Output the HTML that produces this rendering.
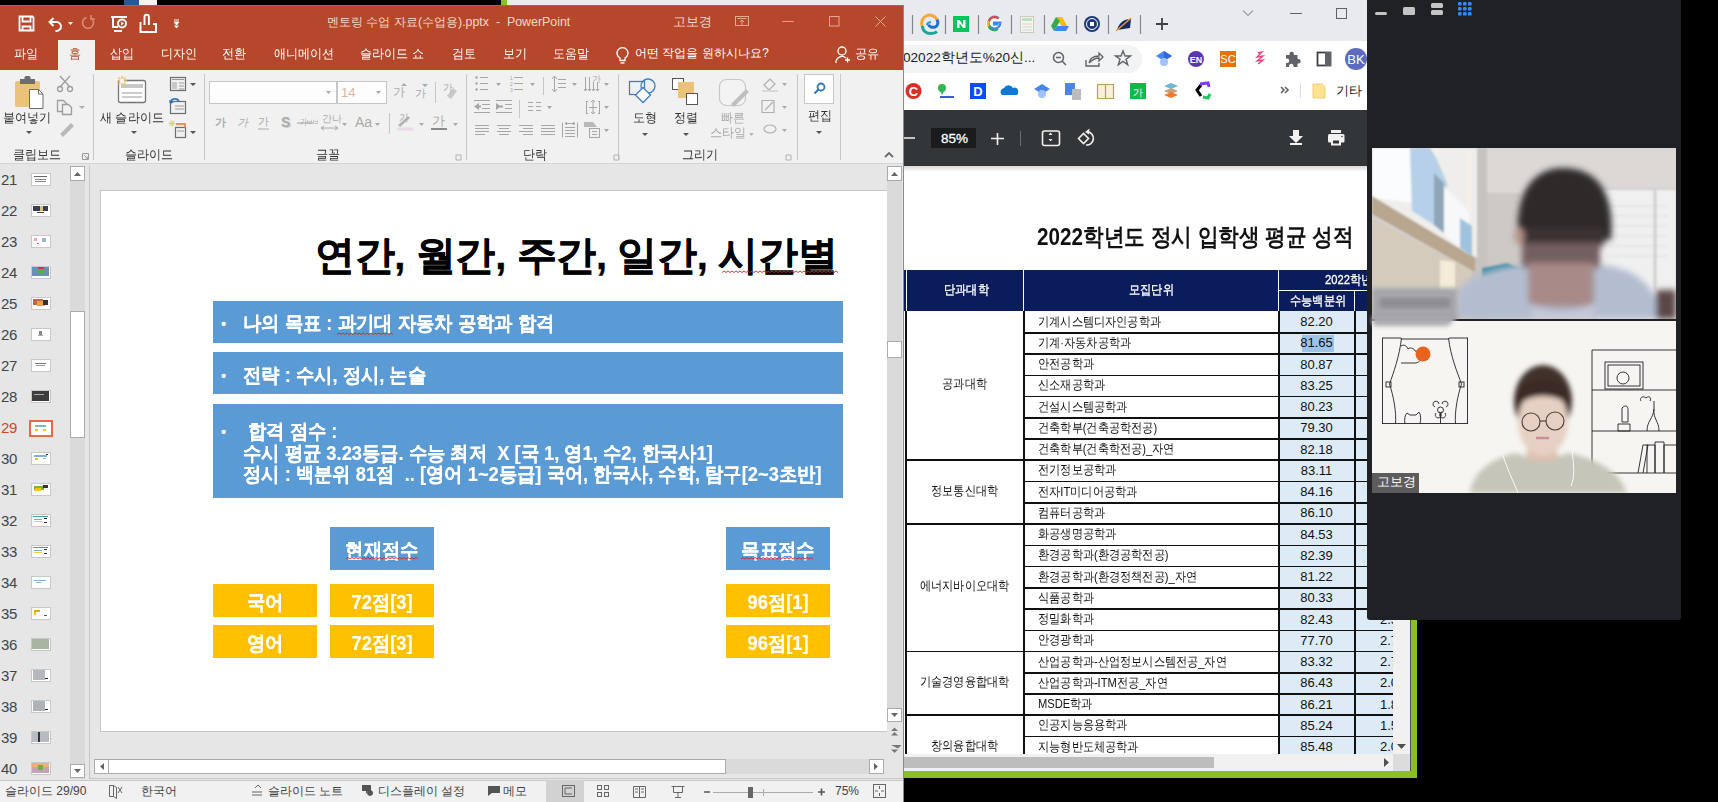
<!DOCTYPE html>
<html><head><meta charset="utf-8">
<style>
*{margin:0;padding:0;box-sizing:border-box}
html,body{width:1718px;height:802px;overflow:hidden;background:#000;font-family:"Liberation Sans",sans-serif;position:relative}
.a{position:absolute}
.t{position:absolute;white-space:nowrap;line-height:1}
.sl{transform:scaleX(0.915);transform-origin:0 0;-webkit-text-stroke:0.15px #fff}
.sc{transform:scaleX(0.915);transform-origin:50% 0;-webkit-text-stroke:0.15px #fff}
.rl{transform:scaleX(0.93);transform-origin:0 0}
.tb{transform:scaleX(0.93);transform-origin:0 0}
.k86{transform:scaleX(0.86);transform-origin:0 0}
.k86c{transform:scaleX(0.86);transform-origin:50% 0}
.th{-webkit-text-stroke:0.35px #fff}
</style></head><body>

<!-- top black strip & chrome frame behind -->
<div class="a" style="left:0;top:0;width:501px;height:5px;background:#000"></div>
<div class="a" style="left:124px;top:0;width:15px;height:5px;background:#2b579a"></div>
<div class="a" style="left:139px;top:0;width:18px;height:5px;background:#f3f3f3"></div>
<div class="a" style="left:501px;top:0;width:6px;height:5px;background:#8bbd27"></div>

<!-- CHROME WINDOW -->
<div class="a" style="left:507px;top:0;width:904px;height:771px;background:#e8eaed"></div>
<div class="a" style="left:903px;top:41px;width:508px;height:69px;background:#fff"></div>
<div class="a" style="left:903px;top:45px;width:239px;height:28px;border-radius:0 14px 14px 0;background:#f1f3f4"></div>
<div class="t" style="left:903px;top:51px;font-size:13.6px;color:#202124">02022학년도%20신...</div>
<svg class="a" style="left:903px;top:0" width="508" height="166">
  <g stroke="#80868b" stroke-width="1.2"><path d="M9.5 15v19M42.5 15v19M75.5 15v19M108.5 15v19M141.5 15v19M173.5 15v19M205.5 15v19M237.5 15v19"/></g>
  <!-- edge -->
  <path d="M19.5 27a8 8 0 0 1 14.5 -7.5" fill="none" stroke="#f6a93b" stroke-width="3"/>
  <path d="M34 19.5c1.5 3 1 6.5 -2 7.5c-3 1 -6 -0.5 -6.5 -2.5" fill="none" stroke="#1e6fd0" stroke-width="3"/>
  <path d="M19.5 26c0 5 4 7.5 8 7.5c3 0 5.5 -1 6.5 -2" fill="none" stroke="#18a89a" stroke-width="3"/>
  <path d="M24 25c0 -2 2 -3 4 -2.5" fill="none" stroke="#2b9bd0" stroke-width="2"/>
  <!-- naver -->
  <rect x="50" y="16" width="16" height="16" fill="#03c75a"/><path d="M54 28v-8h2.5l3.5 5v-5h2.5v8h-2.5l-3.5 -5v5z" fill="#fff"/>
  <!-- google -->
  <circle cx="91" cy="24" r="8" fill="#fff"/>
  <path d="M95.5 24.5h-4.5v-2h6.5a6 6 0 1 1 -1.8 -4.2" fill="none" stroke="#4285f4" stroke-width="2.2"/>
  <path d="M86 21a6 6 0 0 1 9.5 -2.5" fill="none" stroke="#ea4335" stroke-width="2.2"/>
  <path d="M85.5 26a6 6 0 0 0 9.5 3" fill="none" stroke="#34a853" stroke-width="2.2"/><path d="M85.7 21a6 6 0 0 0 0 5.5" fill="none" stroke="#fbbc05" stroke-width="2.2"/>
  <!-- calc -->
  <rect x="117.5" y="16.5" width="13" height="16" fill="#f5f5f0" stroke="#c9c9c0"/><rect x="119" y="18" width="10" height="3" fill="#bfe0bf"/>
  <path d="M119 24h10M119 27h10M119 30h10" stroke="#d5d5d0"/>
  <!-- drive -->
  <path d="M153 17h6l6 10h-6z" fill="#fbbc04"/><path d="M153 17l-5 9 3 5 6 -10z" fill="#34a853"/><path d="M151 31h12l3 -5h-12z" fill="#4285f4"/>
  <!-- univ seal -->
  <circle cx="189" cy="24" r="8" fill="#1f3a7a"/><circle cx="189" cy="24" r="5.5" fill="none" stroke="#fff" stroke-width="1"/><path d="M187 22h4v4h-4z" fill="#fff"/>
  <!-- pen -->
  <path d="M214 30c2 -8 8 -11 14 -11l-1 9z" fill="#1a2a5e"/><path d="M213 31l15 -13" stroke="#f0a040" stroke-width="1.3"/>
  <path d="M253 24h12M259 18v12" stroke="#3c4043" stroke-width="1.8"/>
  <path d="M340 10.5l5 5 5 -5" fill="none" stroke="#5f6368" stroke-width="1"/>
  <path d="M387 13.5h12" stroke="#5f6368" stroke-width="1"/>
  <rect x="433.5" y="8.5" width="10" height="10" fill="none" stroke="#5f6368" stroke-width="1"/>
  <!-- omnibox icons -->
  <circle cx="155.5" cy="57.5" r="5" fill="none" stroke="#5f6368" stroke-width="1.5"/><path d="M159 61l4 4M153 57.5h5" stroke="#5f6368" stroke-width="1.5"/>
  <path d="M183 60v6h13v-3" fill="none" stroke="#5f6368" stroke-width="1.4"/><path d="M186 63c1 -5 5 -7 10 -7v-3l4 4 -4 4v-3c-4 0 -7 2 -10 5" fill="none" stroke="#5f6368" stroke-width="1.3"/>
  <path d="M220 51l2 5h5.5l-4.5 3.3 1.7 5.4 -4.7 -3.3 -4.7 3.3 1.7 -5.4 -4.5 -3.3h5.5z" fill="none" stroke="#5f6368" stroke-width="1.4"/>
  <!-- extensions -->
  <path d="M253 56l8 -5 8 5 -8 5z" fill="#4285f4"/><path d="M261 51l8 5 -8 5z" fill="#3367d6"/><circle cx="261" cy="62" r="4" fill="#a0c3ff"/>
  <circle cx="293" cy="59" r="8" fill="#5e35b1"/><text x="293" y="62.5" font-size="9" font-weight="bold" fill="#fff" text-anchor="middle" font-family="Liberation Sans">EN</text>
  <rect x="317" y="51" width="16" height="16" fill="#e8710a"/><text x="325" y="63" font-size="11" fill="#fff" text-anchor="middle" font-family="Liberation Sans">SC</text>
  <path d="M355 53l4 -1 -5 5 6 -1 -6 5 6 -1 -5 4" fill="none" stroke="#f0407a" stroke-width="1.3"/>
  <path d="M383 55h3.5v-1a2.2 2.2 0 0 1 4.4 0v1h3.6v4h1a2.2 2.2 0 0 1 0 4.4h-1v3.6h-4v-1a2.2 2.2 0 0 0 -4.4 0v1h-3.1v-4h1a2.2 2.2 0 0 0 0 -4.4h-1z" fill="#5f6368"/>
  <rect x="414.5" y="52.5" width="13" height="13" fill="none" stroke="#3c4043" stroke-width="1.8"/><rect x="422" y="52" width="6" height="14" fill="#5f6368"/>
  <circle cx="453" cy="59" r="11" fill="#5c6bc0"/><text x="453" y="64" font-size="13" fill="#fff" text-anchor="middle" font-family="Liberation Sans">BK</text>
  <!-- bookmarks -->
  <circle cx="10.5" cy="91" r="8" fill="#d93025"/><text x="10.5" y="96" font-size="13" font-weight="bold" fill="#fff" text-anchor="middle" font-family="Liberation Sans">C</text>
  <path d="M37 97h14" stroke="#3b5bdb" stroke-width="2"/><circle cx="39" cy="88" r="4" fill="#2fb84f"/><path d="M37 91l2 4 2 -4z" fill="#2fb84f"/>
  <rect x="67" y="83" width="16" height="16" fill="#0a4cff"/><text x="75" y="96" font-size="13" font-weight="bold" fill="#fff" text-anchor="middle" font-family="Liberation Sans">D</text>
  <path d="M99 95a4 4 0 0 1 2 -7a5 5 0 0 1 9 0a3.5 3.5 0 0 1 5 4a3 3 0 0 1 -1 3z" fill="#0f78d4"/>
  <path d="M131 89l8 -5 8 5 -8 5z" fill="#4a86e8"/><circle cx="139" cy="94" r="4" fill="#a0c3ff"/>
  <rect x="162" y="83" width="10" height="12" fill="#4a86e8"/><rect x="169" y="89" width="9" height="11" fill="#bbb"/>
  <path d="M194.5 84.5h16v14h-16zM202.5 85v13" fill="#f7f0dd" stroke="#b8a060" stroke-width="1.2"/>
  <rect x="227" y="83" width="16" height="16" fill="#13b84a"/><text x="235" y="95.5" font-size="10" fill="#fff" text-anchor="middle">가</text>
  <path d="M261 86l7 -3 7 3 -7 3z" fill="#6bb8d8"/><path d="M261 91l7 -3 7 3 -7 3z" fill="#c9a080"/><path d="M261 95l7 -3 7 3 -7 3z" fill="#f07a30"/>
  <path d="M298 85l-4 5 4 6" fill="none" stroke="#000" stroke-width="3"/><path d="M297 84l8 -1 1 4" fill="none" stroke="#7c3aed" stroke-width="3"/><path d="M300 97l5 1 2 -4" fill="none" stroke="#22c55e" stroke-width="3"/>
  <path d="M378 87l3 3 -3 3M382 87l3 3 -3 3" fill="none" stroke="#5f6368" stroke-width="1.6"/>
  <path d="M397.5 83v15" stroke="#dadce0"/>
  <path d="M410 84h9l3 3v11h-12z" fill="#fde293" stroke="#e8c860" stroke-width="0.8"/>
  <!-- pdf toolbar -->
  <rect x="1" y="110" width="507" height="56" fill="#323639"/>
  <path d="M1 138h11M88 138.5h13M94.5 133v12" stroke="#f1f1f1" stroke-width="1.6"/>
  <rect x="28" y="128" width="45" height="20" fill="#191b1c"/>
  <path d="M117.5 131v15" stroke="#6b6e70"/>
  <rect x="139.5" y="131" width="17" height="14.5" rx="2" fill="none" stroke="#f1f1f1" stroke-width="1.6"/>
  <path d="M145.5 135l2 -2.5 2 2.5zM145.5 139l2 2.5 2 -2.5z" fill="#f1f1f1"/>
  <path d="M184.5 131.8A6.6 6.6 0 1 1 183 145" fill="none" stroke="#f1f1f1" stroke-width="1.6"/><path d="M186.5 128.5l-4.5 3.5 4 2.5z" fill="#f1f1f1"/>
  <path d="M175.5 138.5l5 -5 5 5 -5 5z" fill="none" stroke="#f1f1f1" stroke-width="1.6"/>
  <path d="M390 130h6v6h4l-7 7 -7 -7h4z" fill="#f1f1f1"/><rect x="387" y="143" width="12" height="2" fill="#f1f1f1"/>
  <rect x="428" y="130" width="10" height="3" fill="#f1f1f1"/><rect x="425" y="134" width="16.5" height="8.5" rx="1.5" fill="#f1f1f1"/><rect x="428" y="139" width="10" height="6.5" fill="#f1f1f1"/><rect x="430" y="140.5" width="6" height="3" fill="#323639"/><circle cx="439" cy="136.5" r="0.8" fill="#323639"/>
</svg>
<div class="t" style="left:941px;top:132px;font-size:13.5px;color:#fff;-webkit-text-stroke:0.3px #fff">85%</div>
<div class="t" style="left:1336px;top:84px;font-size:13px;color:#202124">기타 북</div>
<!-- pdf page area -->
<div class="a" style="left:903px;top:166px;width:490px;height:588px;background:#fff" id="pdf"></div>
<div class="a" style="left:903px;top:166px;width:490px;height:6px;background:linear-gradient(#d8d8d8,#fff)"></div>
<div class="a" style="left:903px;top:165px;width:490px;height:589px;overflow:hidden">
<div class="a" style="left:-903px;top:-165px;width:1718px;height:802px">
<div class="t k86" id="pdft" style="left:1037px;top:225px;font-size:24px;font-weight:bold;color:#111">2022학년도 정시 입학생 평균 성적</div>
<div class="a" style="left:904px;top:270px;width:489px;height:41px;background:#0b1c5d"></div>
<div class="a" style="left:906px;top:270px;width:1px;height:41px;background:#fff"></div>
<div class="a" style="left:1023px;top:270px;width:1px;height:41px;background:#fff"></div>
<div class="a" style="left:1278px;top:270px;width:1px;height:41px;background:#fff"></div>
<div class="a" style="left:1279px;top:290px;width:114px;height:1px;background:#fff"></div>
<div class="a" style="left:1354px;top:291px;width:1px;height:20px;background:#fff"></div>
<div class="t th k86" style="left:944px;top:283px;font-size:13px;color:#fff">단과대학</div>
<div class="t th k86" style="left:1129px;top:283px;font-size:13px;color:#fff">모집단위</div>
<div class="t th k86" style="left:1290px;top:294px;font-size:13px;color:#fff">수능백분위</div>
<div class="t th k86" style="left:1325px;top:273px;font-size:13px;color:#fff">2022학년도</div>
<div class="a" style="left:1279px;top:311px;width:114px;height:443px;background:#ddebf7"></div>
<div class="a" style="left:1302px;top:335px;width:32px;height:17px;background:#9dc3e6"></div>
<div class="t tr k86" style="left:1038px;top:314.5px;font-size:13px;color:#111">기계시스템디자인공학과</div>
<div class="t tr" style="left:1279px;top:315.0px;width:75px;text-align:center;font-size:13px;color:#111">82.20</div>
<div class="a" style="left:1023px;top:332.0px;width:370px;height:1.6px;background:#111"></div>
<div class="t tr k86" style="left:1038px;top:335.8px;font-size:13px;color:#111">기계·자동차공학과</div>
<div class="t tr" style="left:1279px;top:336.3px;width:75px;text-align:center;font-size:13px;color:#111">81.65</div>
<div class="a" style="left:1023px;top:353.2px;width:370px;height:1.6px;background:#111"></div>
<div class="t tr k86" style="left:1038px;top:357.0px;font-size:13px;color:#111">안전공학과</div>
<div class="t tr" style="left:1279px;top:357.5px;width:75px;text-align:center;font-size:13px;color:#111">80.87</div>
<div class="a" style="left:1023px;top:374.5px;width:370px;height:1.6px;background:#111"></div>
<div class="t tr k86" style="left:1038px;top:378.2px;font-size:13px;color:#111">신소재공학과</div>
<div class="t tr" style="left:1279px;top:378.7px;width:75px;text-align:center;font-size:13px;color:#111">83.25</div>
<div class="a" style="left:1023px;top:395.8px;width:370px;height:1.6px;background:#111"></div>
<div class="t tr k86" style="left:1038px;top:399.5px;font-size:13px;color:#111">건설시스템공학과</div>
<div class="t tr" style="left:1279px;top:400.0px;width:75px;text-align:center;font-size:13px;color:#111">80.23</div>
<div class="a" style="left:1023px;top:417.0px;width:370px;height:1.6px;background:#111"></div>
<div class="t tr k86" style="left:1038px;top:420.8px;font-size:13px;color:#111">건축학부(건축공학전공)</div>
<div class="t tr" style="left:1279px;top:421.3px;width:75px;text-align:center;font-size:13px;color:#111">79.30</div>
<div class="a" style="left:1023px;top:438.2px;width:370px;height:1.6px;background:#111"></div>
<div class="t tr k86" style="left:1038px;top:442.0px;font-size:13px;color:#111">건축학부(건축학전공)_자연</div>
<div class="t tr" style="left:1279px;top:442.5px;width:75px;text-align:center;font-size:13px;color:#111">82.18</div>
<div class="a" style="left:1023px;top:459.5px;width:370px;height:1.6px;background:#111"></div>
<div class="t tr k86" style="left:1038px;top:463.2px;font-size:13px;color:#111">전기정보공학과</div>
<div class="t tr" style="left:1279px;top:463.7px;width:75px;text-align:center;font-size:13px;color:#111">83.11</div>
<div class="a" style="left:1023px;top:480.8px;width:370px;height:1.6px;background:#111"></div>
<div class="t tr k86" style="left:1038px;top:484.5px;font-size:13px;color:#111">전자IT미디어공학과</div>
<div class="t tr" style="left:1279px;top:485.0px;width:75px;text-align:center;font-size:13px;color:#111">84.16</div>
<div class="a" style="left:1023px;top:502.0px;width:370px;height:1.6px;background:#111"></div>
<div class="t tr k86" style="left:1038px;top:505.8px;font-size:13px;color:#111">컴퓨터공학과</div>
<div class="t tr" style="left:1279px;top:506.3px;width:75px;text-align:center;font-size:13px;color:#111">86.10</div>
<div class="a" style="left:1023px;top:523.2px;width:370px;height:1.6px;background:#111"></div>
<div class="t tr k86" style="left:1038px;top:527.0px;font-size:13px;color:#111">화공생명공학과</div>
<div class="t tr" style="left:1279px;top:527.5px;width:75px;text-align:center;font-size:13px;color:#111">84.53</div>
<div class="a" style="left:1023px;top:544.5px;width:370px;height:1.6px;background:#111"></div>
<div class="t tr k86" style="left:1038px;top:548.2px;font-size:13px;color:#111">환경공학과(환경공학전공)</div>
<div class="t tr" style="left:1279px;top:548.7px;width:75px;text-align:center;font-size:13px;color:#111">82.39</div>
<div class="a" style="left:1023px;top:565.8px;width:370px;height:1.6px;background:#111"></div>
<div class="t tr k86" style="left:1038px;top:569.5px;font-size:13px;color:#111">환경공학과(환경정책전공)_자연</div>
<div class="t tr" style="left:1279px;top:570.0px;width:75px;text-align:center;font-size:13px;color:#111">81.22</div>
<div class="a" style="left:1023px;top:587.0px;width:370px;height:1.6px;background:#111"></div>
<div class="t tr k86" style="left:1038px;top:590.8px;font-size:13px;color:#111">식품공학과</div>
<div class="t tr" style="left:1279px;top:591.3px;width:75px;text-align:center;font-size:13px;color:#111">80.33</div>
<div class="a" style="left:1023px;top:608.2px;width:370px;height:1.6px;background:#111"></div>
<div class="t tr k86" style="left:1038px;top:612.0px;font-size:13px;color:#111">정밀화학과</div>
<div class="t tr" style="left:1279px;top:612.5px;width:75px;text-align:center;font-size:13px;color:#111">82.43</div>
<div class="t tr" style="left:1380px;top:612.5px;font-size:13px;color:#111">2.5</div>
<div class="a" style="left:1023px;top:629.5px;width:370px;height:1.6px;background:#111"></div>
<div class="t tr k86" style="left:1038px;top:633.2px;font-size:13px;color:#111">안경광학과</div>
<div class="t tr" style="left:1279px;top:633.7px;width:75px;text-align:center;font-size:13px;color:#111">77.70</div>
<div class="t tr" style="left:1380px;top:633.7px;font-size:13px;color:#111">2.7</div>
<div class="a" style="left:1023px;top:650.8px;width:370px;height:1.6px;background:#111"></div>
<div class="t tr k86" style="left:1038px;top:654.5px;font-size:13px;color:#111">산업공학과-산업정보시스템전공_자연</div>
<div class="t tr" style="left:1279px;top:655.0px;width:75px;text-align:center;font-size:13px;color:#111">83.32</div>
<div class="t tr" style="left:1380px;top:655.0px;font-size:13px;color:#111">2.7</div>
<div class="a" style="left:1023px;top:672.0px;width:370px;height:1.6px;background:#111"></div>
<div class="t tr k86" style="left:1038px;top:675.8px;font-size:13px;color:#111">산업공학과-ITM전공_자연</div>
<div class="t tr" style="left:1279px;top:676.3px;width:75px;text-align:center;font-size:13px;color:#111">86.43</div>
<div class="t tr" style="left:1380px;top:676.3px;font-size:13px;color:#111">2.0</div>
<div class="a" style="left:1023px;top:693.2px;width:370px;height:1.6px;background:#111"></div>
<div class="t tr k86" style="left:1038px;top:697.0px;font-size:13px;color:#111">MSDE학과</div>
<div class="t tr" style="left:1279px;top:697.5px;width:75px;text-align:center;font-size:13px;color:#111">86.21</div>
<div class="t tr" style="left:1380px;top:697.5px;font-size:13px;color:#111">1.8</div>
<div class="a" style="left:1023px;top:714.5px;width:370px;height:1.6px;background:#111"></div>
<div class="t tr k86" style="left:1038px;top:718.2px;font-size:13px;color:#111">인공지능응용학과</div>
<div class="t tr" style="left:1279px;top:718.7px;width:75px;text-align:center;font-size:13px;color:#111">85.24</div>
<div class="t tr" style="left:1380px;top:718.7px;font-size:13px;color:#111">1.5</div>
<div class="a" style="left:1023px;top:735.8px;width:370px;height:1.6px;background:#111"></div>
<div class="t tr k86" style="left:1038px;top:739.5px;font-size:13px;color:#111">지능형반도체공학과</div>
<div class="t tr" style="left:1279px;top:740.0px;width:75px;text-align:center;font-size:13px;color:#111">85.48</div>
<div class="t tr" style="left:1380px;top:740.0px;font-size:13px;color:#111">2.0</div>
<div class="a" style="left:1023px;top:757.0px;width:370px;height:1.6px;background:#111"></div>
<div class="a" style="left:905px;top:459.2px;width:488px;height:1.6px;background:#111"></div>
<div class="t tr k86c" style="left:906px;top:377.4px;width:117px;text-align:center;font-size:13px;color:#111">공과대학</div>
<div class="a" style="left:905px;top:523.0px;width:488px;height:1.6px;background:#111"></div>
<div class="t tr k86c" style="left:906px;top:483.6px;width:117px;text-align:center;font-size:13px;color:#111">정보통신대학</div>
<div class="a" style="left:905px;top:650.5px;width:488px;height:1.6px;background:#111"></div>
<div class="t tr k86c" style="left:906px;top:579.3px;width:117px;text-align:center;font-size:13px;color:#111">에너지바이오대학</div>
<div class="a" style="left:905px;top:714.2px;width:488px;height:1.6px;background:#111"></div>
<div class="t tr k86c" style="left:906px;top:674.9px;width:117px;text-align:center;font-size:13px;color:#111">기술경영융합대학</div>
<div class="a" style="left:905px;top:778.0px;width:488px;height:1.6px;background:#111"></div>
<div class="t tr k86c" style="left:906px;top:738.6px;width:117px;text-align:center;font-size:13px;color:#111">창의융합대학</div>
<div class="a" style="left:905px;top:311px;width:1.8px;height:443px;background:#111"></div>
<div class="a" style="left:1023px;top:311px;width:1.8px;height:443px;background:#111"></div>
<div class="a" style="left:1278px;top:311px;width:1.8px;height:443px;background:#111"></div>
<div class="a" style="left:1354px;top:311px;width:1.8px;height:443px;background:#111"></div>
</div></div>
<!-- v scrollbar -->
<div class="a" style="left:1393px;top:165px;width:17px;height:606px;background:#f1f1f1"></div>
<div class="a" style="left:1393px;top:754px;width:17px;height:17px;background:#dcdcdc"></div>
<div class="a" style="left:1410px;top:0;width:1px;height:771px;background:#555"></div>
<svg class="a" style="left:1393px;top:740px" width="17" height="12"><path d="M4 4h9l-4.5 5z" fill="#505050"/></svg>
<!-- h scrollbar -->
<div class="a" style="left:903px;top:754px;width:490px;height:17px;background:#f1f1f1"></div>
<div class="a" style="left:903px;top:757px;width:311px;height:11px;background:#bdbdbd"></div>
<svg class="a" style="left:1380px;top:754px" width="13" height="17"><path d="M4 4v9l5 -4.5z" fill="#505050"/></svg>
<div class="a" style="left:1411px;top:0;width:6px;height:778px;background:#8bbd27"></div>
<div class="a" style="left:501px;top:771px;width:916px;height:7px;background:#8bbd27"></div>

<!-- POWERPOINT WINDOW -->
<div id="ppt" class="a" style="left:0;top:5px;width:904px;height:797px;background:#b7472a;border-top:1px solid #777;border-right:1px solid #8a8a8a">
  <!-- ribbon -->
  <div class="a" style="left:0;top:64px;width:903px;height:94px;background:#f1f1f1;border-bottom:1px solid #d5d5d5"></div>
  <div class="a" style="left:58px;top:34px;width:37px;height:31px;background:#f1f1f1"></div>
  <!-- title bar -->
  <div class="t" id="ttl" style="left:327px;top:10px;font-size:12.4px;color:#f4d6cb">멘토링 수업 자료(수업용).pptx&nbsp;&nbsp;-&nbsp;&nbsp;PowerPoint</div>
  <div class="t" style="left:673px;top:9px;font-size:13px;color:#f4d6cb">고보경</div>
  <svg class="a" style="left:0;top:0" width="903" height="34">
    <path d="M19.5 10.5h13l1 1v13h-14zM22.5 11v4.5h8v-4.5M22.5 24v-3.5h8v3.5" fill="none" stroke="#fff" stroke-width="1.8"/>
    <g fill="none" stroke="#fff" stroke-width="1.9">
      <path d="M50 16h6.5a4.5 4.5 0 0 1 0 9h-1"/><path d="M53.5 12l-4 4 4 4"/>
      <path d="M111 11h16M113 11v10h5"/><circle cx="122" cy="17.5" r="4"/><path d="M114 25h8"/>
      <path d="M140.5 16v10h15.5v-8h-3"/><path d="M144.5 19v-8a2.2 2.2 0 0 1 4.4 0v8"/>
    </g>
    <path d="M121 15.5v4l3 -2z" fill="#fff"/>
    <g fill="none" stroke="#d98b77" stroke-width="1.6"><path d="M91.5 12.5a5.5 5.5 0 1 1 -5 -1"/><path d="M91 9v4h4"/></g>
    <path d="M68 16h5l-2.5 3z" fill="#fff"/>
    <path d="M174 16h5l-2.5 3zM174 14h5" fill="#fff" stroke="#fff" stroke-width="1"/>
    <path d="M174 19.5h5l-2.5 3z" fill="#fff"/>
    <!-- window buttons -->
    <g fill="none" stroke="#e8a898" stroke-width="1">
      <rect x="735.5" y="10.5" width="13" height="9"/><path d="M737.5 12.5h9M742 19v-5M740 16l2 -2 2 2"/>
      <path d="M782.5 15.5h11"/>
      <rect x="829.5" y="10.5" width="9.5" height="9.5"/>
      <path d="M875.5 10.5l10 10M885.5 10.5l-10 10"/>
    </g>
  </svg>
  <!-- tabs -->
  <div class="t tb" style="left:14px;top:41px;font-size:13px;color:#fff">파일</div>
  <div class="t tb" style="left:69px;top:41px;font-size:13px;color:#b7472a">홈</div>
  <div class="t tb" style="left:110px;top:41px;font-size:13px;color:#fff">삽입</div>
  <div class="t tb" style="left:161px;top:41px;font-size:13px;color:#fff">디자인</div>
  <div class="t tb" style="left:222px;top:41px;font-size:13px;color:#fff">전환</div>
  <div class="t tb" style="left:274px;top:41px;font-size:13px;color:#fff">애니메이션</div>
  <div class="t tb" style="left:360px;top:41px;font-size:13px;color:#fff">슬라이드 쇼</div>
  <div class="t tb" style="left:452px;top:41px;font-size:13px;color:#fff">검토</div>
  <div class="t tb" style="left:503px;top:41px;font-size:13px;color:#fff">보기</div>
  <div class="t tb" style="left:553px;top:41px;font-size:13px;color:#fff">도움말</div>
  <div class="t" id="srch" style="left:635px;top:41px;font-size:12.4px;color:#fff">어떤 작업을 원하시나요?</div>
  <div class="t tb" style="left:855px;top:41px;font-size:13px;color:#fff">공유</div>
  <svg class="a" style="left:0;top:34px" width="903" height="30">
    <g fill="none" stroke="#fff" stroke-width="1.3">
      <path d="M620 20.5v-2.5a5.5 5.5 0 1 1 5 0v2.5z"/><path d="M620.5 23h4"/>
      <circle cx="842" cy="11" r="4"/><path d="M836 23a6 6 0 0 1 10 -5"/><path d="M845 20h5M847.5 17.5v5"/>
    </g>
  </svg>

  <!-- lower area -->
  <div class="a" style="left:0;top:158px;width:903px;height:617px;background:#e6e6e6"></div>
  <!-- status bar -->
  <div class="a" style="left:0;top:774px;width:903px;height:22px;background:#f1f1f1;border-top:1px solid #c8c8c8"></div>
</div>



<!-- LOWER PPT -->
<div class="a" style="left:70px;top:166px;width:15px;height:613px;background:#dadada"></div>
<div class="a" style="left:70px;top:166px;width:15px;height:15px;background:#fff;border:1px solid #ababab"></div>
<div class="a" style="left:70px;top:311px;width:15px;height:127px;background:#fff;border:1px solid #ababab"></div>
<div class="a" style="left:70px;top:764px;width:15px;height:14px;background:#fff;border:1px solid #ababab"></div>
<svg class="a" style="left:0;top:0" width="903" height="802">
  <path d="M74 176h7l-3.5-4z M74 769h7l-3.5 4z" fill="#666"/>
  <path d="M89.5 166v613" stroke="#c6c6c6"/>
</svg>
<div class="t" style="left:1px;top:172px;font-size:15px;color:#444;letter-spacing:-0.3px">21</div>
<svg class="a" style="left:31px;top:173px" width="20" height="13"><rect x="0.5" y="0.5" width="19" height="12" fill="#fff" stroke="#c8c8c8"/><rect x="3" y="3" width="13" height="1" fill="#666"/><rect x="4" y="6" width="11" height="1" fill="#888"/><rect x="4" y="8" width="11" height="1" fill="#888"/></svg>
<div class="t" style="left:1px;top:203px;font-size:15px;color:#444;letter-spacing:-0.3px">22</div>
<svg class="a" style="left:31px;top:204px" width="20" height="13"><rect x="0.5" y="0.5" width="19" height="12" fill="#fff" stroke="#c8c8c8"/><rect x="2" y="2" width="15" height="5" fill="#3a3d55"/><rect x="9" y="2" width="3" height="5" fill="#d9c27a"/><rect x="6" y="8" width="7" height="1" fill="#444"/></svg>
<div class="t" style="left:1px;top:234px;font-size:15px;color:#444;letter-spacing:-0.3px">23</div>
<svg class="a" style="left:31px;top:235px" width="20" height="13"><rect x="0.5" y="0.5" width="19" height="12" fill="#fff" stroke="#c8c8c8"/><rect x="3" y="3" width="3" height="3" fill="#e9a6c0"/><rect x="11" y="3" width="4" height="4" fill="#9fb3d8"/><rect x="6" y="8" width="2" height="1" fill="#e57"/></svg>
<div class="t" style="left:1px;top:265px;font-size:15px;color:#444;letter-spacing:-0.3px">24</div>
<svg class="a" style="left:31px;top:266px" width="20" height="13"><rect x="0.5" y="0.5" width="19" height="12" fill="#fff" stroke="#c8c8c8"/><rect x="1" y="1" width="17" height="9" fill="#6b8fb8"/><rect x="7" y="2" width="6" height="6" fill="#4caf50"/><rect x="7" y="1" width="6" height="2" fill="#e91e63"/></svg>
<div class="t" style="left:1px;top:296px;font-size:15px;color:#444;letter-spacing:-0.3px">25</div>
<svg class="a" style="left:31px;top:297px" width="20" height="13"><rect x="0.5" y="0.5" width="19" height="12" fill="#fff" stroke="#c8c8c8"/><rect x="2" y="2" width="10" height="6" fill="#c26a3a"/><rect x="6" y="4" width="8" height="5" fill="#e8a040"/><rect x="12" y="3" width="5" height="5" fill="#333"/></svg>
<div class="t" style="left:1px;top:327px;font-size:15px;color:#444;letter-spacing:-0.3px">26</div>
<svg class="a" style="left:31px;top:328px" width="20" height="13"><rect x="0.5" y="0.5" width="19" height="12" fill="#fff" stroke="#c8c8c8"/><rect x="8" y="3" width="3" height="4" fill="#888"/><rect x="7" y="7" width="5" height="1" fill="#aaa"/></svg>
<div class="t" style="left:1px;top:358px;font-size:15px;color:#444;letter-spacing:-0.3px">27</div>
<svg class="a" style="left:31px;top:359px" width="20" height="13"><rect x="0.5" y="0.5" width="19" height="12" fill="#fff" stroke="#c8c8c8"/><rect x="4" y="4" width="11" height="1" fill="#777"/><rect x="5" y="6" width="9" height="1" fill="#999"/></svg>
<div class="t" style="left:1px;top:389px;font-size:15px;color:#444;letter-spacing:-0.3px">28</div>
<svg class="a" style="left:31px;top:390px" width="20" height="13"><rect x="0.5" y="0.5" width="19" height="12" fill="#fff" stroke="#c8c8c8"/><rect x="1" y="1" width="17" height="10" fill="#3d3d3d"/><rect x="3" y="4" width="10" height="1" fill="#aaa"/></svg>
<div class="t" style="left:1px;top:420px;font-size:15px;color:#d24726;letter-spacing:-0.3px">29</div>
<div class="a" style="left:29px;top:420px;width:24px;height:17px;background:#ea6a48"></div>
<svg class="a" style="left:31px;top:422px" width="20" height="13"><rect width="20" height="13" fill="#fff"/><rect x="4" y="3" width="11" height="2" fill="#7fb0e0"/><rect x="4" y="7" width="3" height="2" fill="#ffc000"/><rect x="12" y="7" width="3" height="2" fill="#ffc000"/></svg>
<div class="t" style="left:1px;top:451px;font-size:15px;color:#444;letter-spacing:-0.3px">30</div>
<svg class="a" style="left:31px;top:452px" width="20" height="13"><rect x="0.5" y="0.5" width="19" height="12" fill="#fff" stroke="#c8c8c8"/><rect x="3" y="3" width="13" height="2" fill="#7fb0e0"/><rect x="4" y="6" width="3" height="2" fill="#ffc000"/><rect x="12" y="6" width="3" height="1" fill="#7fb0e0"/><rect x="15" y="2" width="2" height="1" fill="#333"/></svg>
<div class="t" style="left:1px;top:482px;font-size:15px;color:#444;letter-spacing:-0.3px">31</div>
<svg class="a" style="left:31px;top:483px" width="20" height="13"><rect x="0.5" y="0.5" width="19" height="12" fill="#fff" stroke="#c8c8c8"/><rect x="3" y="3" width="10" height="4" fill="#7bb33a"/><rect x="4" y="5" width="6" height="3" fill="#ffc000"/><rect x="12" y="2" width="5" height="3" fill="#333"/></svg>
<div class="t" style="left:1px;top:513px;font-size:15px;color:#444;letter-spacing:-0.3px">32</div>
<svg class="a" style="left:31px;top:514px" width="20" height="13"><rect x="0.5" y="0.5" width="19" height="12" fill="#fff" stroke="#c8c8c8"/><rect x="2" y="2" width="15" height="1" fill="#3a9"/><rect x="3" y="5" width="8" height="1" fill="#7ab"/><rect x="3" y="7" width="8" height="1" fill="#fc3"/><rect x="13" y="4" width="3" height="1" fill="#333"/><rect x="13" y="8" width="3" height="1" fill="#333"/></svg>
<div class="t" style="left:1px;top:544px;font-size:15px;color:#444;letter-spacing:-0.3px">33</div>
<svg class="a" style="left:31px;top:545px" width="20" height="13"><rect x="0.5" y="0.5" width="19" height="12" fill="#fff" stroke="#c8c8c8"/><rect x="2" y="2" width="15" height="1" fill="#3a9"/><rect x="3" y="5" width="8" height="1" fill="#7ab"/><rect x="3" y="7" width="8" height="1" fill="#fc3"/><rect x="13" y="4" width="3" height="1" fill="#333"/><rect x="13" y="8" width="3" height="1" fill="#333"/></svg>
<div class="t" style="left:1px;top:575px;font-size:15px;color:#444;letter-spacing:-0.3px">34</div>
<svg class="a" style="left:31px;top:576px" width="20" height="13"><rect x="0.5" y="0.5" width="19" height="12" fill="#fff" stroke="#c8c8c8"/><rect x="3" y="4" width="12" height="1" fill="#7fb0e0"/><rect x="5" y="6" width="5" height="1" fill="#aaa"/></svg>
<div class="t" style="left:1px;top:606px;font-size:15px;color:#444;letter-spacing:-0.3px">35</div>
<svg class="a" style="left:31px;top:607px" width="20" height="13"><rect x="0.5" y="0.5" width="19" height="12" fill="#fff" stroke="#c8c8c8"/><rect x="3" y="3" width="6" height="2" fill="#f5a000"/><rect x="3" y="5" width="2" height="3" fill="#ffc000"/><rect x="13" y="8" width="3" height="1" fill="#555"/></svg>
<div class="t" style="left:1px;top:637px;font-size:15px;color:#444;letter-spacing:-0.3px">36</div>
<svg class="a" style="left:31px;top:638px" width="20" height="13"><rect x="0.5" y="0.5" width="19" height="12" fill="#fff" stroke="#c8c8c8"/><rect x="1" y="1" width="17" height="10" fill="#a9b5a3"/></svg>
<div class="t" style="left:1px;top:668px;font-size:15px;color:#444;letter-spacing:-0.3px">37</div>
<svg class="a" style="left:31px;top:669px" width="20" height="13"><rect x="0.5" y="0.5" width="19" height="12" fill="#fff" stroke="#c8c8c8"/><rect x="2" y="1" width="12" height="10" fill="#b3b7be"/><rect x="14" y="9" width="3" height="1" fill="#222"/></svg>
<div class="t" style="left:1px;top:699px;font-size:15px;color:#444;letter-spacing:-0.3px">38</div>
<svg class="a" style="left:31px;top:700px" width="20" height="13"><rect x="0.5" y="0.5" width="19" height="12" fill="#fff" stroke="#c8c8c8"/><rect x="2" y="1" width="12" height="10" fill="#aeb2b9"/><rect x="14" y="9" width="3" height="1" fill="#222"/></svg>
<div class="t" style="left:1px;top:730px;font-size:15px;color:#444;letter-spacing:-0.3px">39</div>
<svg class="a" style="left:31px;top:731px" width="20" height="13"><rect x="0.5" y="0.5" width="19" height="12" fill="#fff" stroke="#c8c8c8"/><rect x="1" y="1" width="17" height="10" fill="#b8bcc1"/><rect x="7" y="1" width="2" height="10" fill="#333"/></svg>
<div class="t" style="left:1px;top:761px;font-size:15px;color:#444;letter-spacing:-0.3px">40</div>
<svg class="a" style="left:31px;top:762px" width="20" height="13"><rect x="0.5" y="0.5" width="19" height="12" fill="#fff" stroke="#c8c8c8"/><rect x="1" y="1" width="17" height="10" fill="#c8a0b8"/><rect x="1" y="1" width="17" height="4" fill="#e9b080"/><rect x="7" y="3" width="5" height="5" fill="#6ab04c"/></svg>
<div class="a" style="left:100px;top:190px;width:788px;height:542px;background:#fff;border:1px solid #c6c6c6"></div>
<!-- slide v scroll -->
<div class="a" style="left:887px;top:166px;width:15px;height:590px;background:#dadada"></div>
<div class="a" style="left:887px;top:166px;width:15px;height:15px;background:#fff;border:1px solid #ababab"></div>
<div class="a" style="left:887px;top:341px;width:15px;height:17px;background:#fff;border:1px solid #ababab"></div>
<div class="a" style="left:887px;top:708px;width:15px;height:14px;background:#fff;border:1px solid #ababab"></div>
<div class="a" style="left:887px;top:722px;width:15px;height:34px;background:#e6e6e6"></div>
<!-- slide h scroll -->
<div class="a" style="left:94px;top:759px;width:790px;height:15px;background:#dadada"></div>
<div class="a" style="left:94px;top:759px;width:15px;height:15px;background:#fff;border:1px solid #ababab"></div>
<div class="a" style="left:108px;top:759px;width:618px;height:15px;background:#fff;border:1px solid #ababab"></div>
<div class="a" style="left:869px;top:759px;width:15px;height:15px;background:#fff;border:1px solid #ababab"></div>
<svg class="a" style="left:0;top:0" width="903" height="802">
  <path d="M891 176h7l-3.5-4zM891 713h7l-3.5 4z" fill="#666"/>
  <path d="M891 731h7l-3.5-3.5zM891 735.5h7l-3.5-3.5zM891 745h7l3.5 0 -3.5 3.5zM891 749.5h7l-3.5 3.5z" fill="#777"/>
  <path d="M104 763v7l-4-3.5zM874 763v7l4-3.5z" fill="#666"/>
  <path d="M90 778.5h813" stroke="#c8c8c8"/>
</svg>
<!-- status bar -->
<div class="t" style="left:5px;top:785px;font-size:12px;color:#444">슬라이드 29/90</div>
<div class="t" style="left:141px;top:785px;font-size:12px;color:#444">한국어</div>
<div class="t" style="left:268px;top:785px;font-size:12px;color:#444">슬라이드 노트</div>
<div class="t" style="left:378px;top:785px;font-size:12px;color:#444">디스플레이 설정</div>
<div class="t" style="left:503px;top:785px;font-size:12px;color:#444">메모</div>
<div class="t" style="left:835px;top:785px;font-size:12px;color:#444">75%</div>
<div class="a" style="left:546px;top:780px;width:38px;height:22px;background:#d2d2d2"></div>
<svg class="a" style="left:0;top:780px" width="903" height="22">
  <g fill="none" stroke="#666" stroke-width="1">
    <path d="M109.5 5.5h4v11h-4zM113.5 5.5l3 2v11l-3 -2"/><path d="M118 7l4 6M122 7l-4 6"/>
    <path d="M255 8l3 -3 3 3M252 12h10M252 15h10"/>
    <rect x="562.5" y="5.5" width="12" height="11"/><path d="M565 8v6h7M565 8h7"/>
    <rect x="597.5" y="5.5" width="4" height="4"/><rect x="604.5" y="5.5" width="4" height="4"/><rect x="597.5" y="12.5" width="4" height="4"/><rect x="604.5" y="12.5" width="4" height="4"/>
    <path d="M633.5 6.5h6v11h-6zM639.5 6.5h6v11h-6zM635 9h3M635 12h3M641 9h3M641 12h3"/>
    <path d="M671.5 6.5h13M673.5 6.5v6h9v-6M678 12.5v5M675 17.5h6"/>
    <rect x="873.5" y="4.5" width="12" height="13"/><path d="M879.5 6v3M879.5 13v3M875 11h3M881 11h3"/>
  </g>
  <path d="M362 5h9v6h-3l-2 3v-3h-4z" fill="#555"/><path d="M370 10a3 3 0 1 0 0.1 0z" fill="#555"/>
  <path d="M488 6h12v7h-8l-4 3z" fill="#555"/>
  <path d="M704 12h6M818 12h7M821.5 8.5v7" stroke="#555" stroke-width="1.6"/>
  <path d="M713 12.5h100" stroke="#aaa"/><path d="M763.5 9v7" stroke="#aaa"/>
  <rect x="748" y="7" width="5" height="11" fill="#666"/>
</svg>


<!-- SLIDE CONTENT -->
<div id="stitle" class="t" style="-webkit-text-stroke:0.35px #000;left:315px;top:235px;font-size:40px;letter-spacing:-0.35px;font-weight:bold;color:#000">연간, 월간, 주간, 일간, 시간별</div>
<div class="a" style="left:213px;top:301px;width:630px;height:42px;background:#5b9bd5"></div>
<div class="a" style="left:213px;top:352px;width:630px;height:42px;background:#5b9bd5"></div>
<div class="a" style="left:213px;top:404px;width:630px;height:94px;background:#5b9bd5"></div>
<div class="t" style="left:221px;top:316px;font-size:15px;font-weight:bold;color:#fff">•</div>
<div class="t sl" style="left:243px;top:313px;font-size:20px;font-weight:bold;color:#fff" id="b1">나의 목표 : 과기대 자동차 공학과 합격</div>
<div class="t" style="left:221px;top:368px;font-size:15px;font-weight:bold;color:#fff">•</div>
<div class="t sl" style="left:243px;top:365px;font-size:20px;font-weight:bold;color:#fff" id="b2">전략 : 수시, 정시, 논술</div>
<div class="t" style="left:221px;top:424px;font-size:15px;font-weight:bold;color:#fff">•</div>
<div class="t sl" style="left:248px;top:421px;font-size:20px;font-weight:bold;color:#fff" id="b3">합격 점수 :</div>
<div class="t sl" style="left:243px;top:443px;font-size:20px;font-weight:bold;color:#fff" id="b4">수시 평균 3.23등급. 수능 최저&nbsp; X [국 1, 영1, 수2, 한국사1]</div>
<div class="t sl" style="left:243px;top:464px;font-size:20px;font-weight:bold;color:#fff" id="b5">정시 : 백분위 81점&nbsp; .. [영어 1~2등급] 국어, 한국사, 수학, 탐구[2~3초반]</div>
<div class="a" style="left:330px;top:527px;width:104px;height:43px;background:#5b9bd5"></div>
<div class="a" style="left:726px;top:527px;width:104px;height:43px;background:#5b9bd5"></div>
<div class="a" style="left:213px;top:584px;width:104px;height:33px;background:#ffc000"></div>
<div class="a" style="left:330px;top:584px;width:104px;height:33px;background:#ffc000"></div>
<div class="a" style="left:726px;top:584px;width:104px;height:33px;background:#ffc000"></div>
<div class="a" style="left:213px;top:625px;width:104px;height:33px;background:#ffc000"></div>
<div class="a" style="left:330px;top:625px;width:104px;height:33px;background:#ffc000"></div>
<div class="a" style="left:726px;top:625px;width:104px;height:33px;background:#ffc000"></div>
<div class="t sc" style="left:330px;top:540px;width:104px;text-align:center;font-size:20px;font-weight:bold;color:#fff">현재점수</div>
<div class="t sc" style="left:726px;top:540px;width:104px;text-align:center;font-size:20px;font-weight:bold;color:#fff">목표점수</div>
<div class="t sc" style="left:213px;top:592px;width:104px;text-align:center;font-size:20px;font-weight:bold;color:#fff">국어</div>
<div class="t sc" style="left:330px;top:592px;width:104px;text-align:center;font-size:20px;font-weight:bold;color:#fff">72점[3]</div>
<div class="t sc" style="left:726px;top:592px;width:104px;text-align:center;font-size:20px;font-weight:bold;color:#fff">96점[1]</div>
<div class="t sc" style="left:213px;top:633px;width:104px;text-align:center;font-size:20px;font-weight:bold;color:#fff">영어</div>
<div class="t sc" style="left:330px;top:633px;width:104px;text-align:center;font-size:20px;font-weight:bold;color:#fff">72점[3]</div>
<div class="t sc" style="left:726px;top:633px;width:104px;text-align:center;font-size:20px;font-weight:bold;color:#fff">96점[1]</div>

<svg class="a" style="left:0;top:0" width="903" height="700"><path d="M337 334.5 L339 333.0 L341 334.5 L343 333.0 L345 334.5 L347 333.0 L349 334.5 L351 333.0 L353 334.5 L355 333.0 L357 334.5 L359 333.0 L361 334.5 L363 333.0 L365 334.5 L367 333.0 L369 334.5 L371 333.0 L373 334.5 L375 333.0 L377 334.5 L379 333.0 L381 334.5 L383 333.0 L385 334.5 L387 333.0 L389 334.5 L391 333.0 L393 334.5" fill="none" stroke="#e02020" stroke-width="0.9"/><path d="M722 272.5 L724 271.0 L726 272.5 L728 271.0 L730 272.5 L732 271.0 L734 272.5 L736 271.0 L738 272.5 L740 271.0 L742 272.5 L744 271.0 L746 272.5 L748 271.0 L750 272.5 L752 271.0 L754 272.5 L756 271.0 L758 272.5 L760 271.0 L762 272.5 L764 271.0 L766 272.5 L768 271.0 L770 272.5 L772 271.0 L774 272.5 L776 271.0 L778 272.5 L780 271.0 L782 272.5 L784 271.0 L786 272.5 L788 271.0 L790 272.5 L792 271.0 L794 272.5 L796 271.0 L798 272.5 L800 271.0 L802 272.5 L804 271.0 L806 272.5 L808 271.0 L810 272.5 L812 271.0 L814 272.5 L816 271.0 L818 272.5 L820 271.0 L822 272.5 L824 271.0 L826 272.5 L828 271.0 L830 272.5 L832 271.0 L834 272.5 L836 271.0 L838 272.5" fill="none" stroke="#e02020" stroke-width="0.9"/><path d="M346 559 L348 557.5 L350 559 L352 557.5 L354 559 L356 557.5 L358 559 L360 557.5 L362 559 L364 557.5 L366 559 L368 557.5 L370 559 L372 557.5 L374 559 L376 557.5 L378 559 L380 557.5 L382 559 L384 557.5 L386 559 L388 557.5 L390 559 L392 557.5 L394 559 L396 557.5 L398 559 L400 557.5 L402 559 L404 557.5 L406 559 L408 557.5 L410 559 L412 557.5 L414 559 L416 557.5 L418 559" fill="none" stroke="#e02020" stroke-width="0.9"/><path d="M741 559 L743 557.5 L745 559 L747 557.5 L749 559 L751 557.5 L753 559 L755 557.5 L757 559 L759 557.5 L761 559 L763 557.5 L765 559 L767 557.5 L769 559 L771 557.5 L773 559 L775 557.5 L777 559 L779 557.5 L781 559 L783 557.5 L785 559 L787 557.5 L789 559 L791 557.5 L793 559 L795 557.5 L797 559 L799 557.5 L801 559 L803 557.5 L805 559 L807 557.5 L809 559 L811 557.5 L813 559" fill="none" stroke="#e02020" stroke-width="0.9"/></svg>
<!-- RIBBON CONTENT (page coords) -->
<svg class="a" style="left:0;top:0" width="903" height="165">
  <g stroke="#c6c6c6" stroke-width="1">
    <path d="M93.5 74v86M204.5 74v86M466.5 74v86M618.5 74v86M797.5 74v86M840.5 74v86"/>
    <path d="M435.5 82v21M389.5 113v21M543.5 77v18M519.5 100v18"/>
  </g>
  <!-- paste -->
  <rect x="15" y="81" width="25" height="26" rx="2" fill="#ebc27a"/>
  <path d="M20 79h15v5h-15z" fill="#6d6d6d"/><rect x="24.5" y="76" width="6" height="4" rx="1.5" fill="#6d6d6d"/>
  <path d="M29.5 89.5h9l4.5 4.5v14.5h-13.5z" fill="#fff" stroke="#6d6d6d" stroke-width="1"/>
  <path d="M38.5 89.5v4.5h4.5" fill="none" stroke="#6d6d6d"/>
  <path d="M26 131h6l-3 3z" fill="#555"/>
  <!-- scissors -->
  <g fill="none" stroke="#9d9d9d" stroke-width="1.3"><path d="M60 76l10 11M70 76l-10 11"/><circle cx="60" cy="89" r="2.5"/><circle cx="70" cy="89" r="2.5"/>
  <path d="M57.5 100.5h6l3 3v8h-9z"/><path d="M62.5 104.5h6l3 3v7h-9z" fill="#f1f1f1"/></g>
  <path d="M79 106h6l-3 3z" fill="#b0b0b0"/>
  <path d="M60 134l6 -6 3 3 -6 6z M66 128l5 -5 3 3 -5 5z" fill="#b9b9b9"/>
  <!-- launcher -->
  <path d="M82.5 153.5h6v6h-6zM84 155l4 4M88 156.5v2.5h-2.5" fill="none" stroke="#9a9a9a" stroke-width="1"/>
  <!-- new slide -->
  <rect x="118.5" y="80.5" width="27" height="22" rx="2" fill="#fff" stroke="#757575" stroke-width="1.3"/>
  <rect x="121" y="84" width="22" height="4" fill="#c8c8c8"/>
  <path d="M122 93h20M122 97h20" stroke="#9a9a9a" stroke-width="1"/>
  <g stroke="#f0c46c" stroke-width="1.6"><path d="M122 76v10M117 81h10M118.5 77.5l7 7M125.5 77.5l-7 7"/></g>
  <circle cx="122" cy="81" r="2.2" fill="#fff"/>
  <path d="M131 131h6l-3 3z" fill="#555"/>
  <!-- layout/reset/section -->
  <g fill="none" stroke="#6d6d6d" stroke-width="1.2">
    <rect x="170.5" y="77.5" width="15" height="13"/><rect x="170.5" y="101.5" width="15" height="12"/><rect x="175.5" y="127.5" width="10" height="10"/>
  </g>
  <rect x="172" y="82" width="5" height="7" fill="#c8c8c8"/><path d="M172 79.5h12M179 83h5M179 86h5M179 89h5M175 106h9M175 109h9M177 131h7" stroke="#9a9a9a" stroke-width="1"/>
  <path d="M170 103a5 5 0 0 1 9 -2" fill="none" stroke="#2e75b6" stroke-width="1.6"/><path d="M169 100l1.5 4 3.5 -2z" fill="#2e75b6"/>
  <path d="M176 124h9v4" fill="none" stroke="#e87a35" stroke-width="1.5"/>
  <g stroke="#f0c46c" stroke-width="1"><path d="M172 120v7M168.5 123.5h7M169.5 121l5 5M174.5 121l-5 5"/></g>
  <path d="M190 83h6l-3 3zM190 131h6l-3 3z" fill="#555"/>
  <!-- font boxes -->
  <rect x="209.5" y="81.5" width="127" height="22" fill="#fdfdfd" stroke="#c6c6c6"/>
  <rect x="337.5" y="81.5" width="49" height="22" fill="#fdfdfd" stroke="#c6c6c6"/>
  <path d="M326 91h5l-2.5 3zM376 91h5l-2.5 3z" fill="#a8a8a8"/>
  <!-- font size up/down arrows -->
  <path d="M401 86h6l-3 -3zM422 84h6l-3 3z" fill="#aaa"/>
  <!-- clear format -->
  <path d="M447 96l6 -8 4 3 -6 8z" fill="#c8c8c8"/>
  <!-- row2 font -->
  <path d="M342 123h5l-2.5 3zM375 123h5l-2.5 3zM419 123h5l-2.5 3zM453 123h5l-2.5 3z" fill="#aaa"/>
  <path d="M297 123h16" stroke="#a0a0a0" stroke-width="1"/>
  <path d="M321 128h17M321 128l3 -2M321 128l3 2M338 128l-3 -2M338 128l-3 2" stroke="#aaa" stroke-width="1" fill="none"/>
  <path d="M397 129h16" stroke="#e6dbe6" stroke-width="3"/><path d="M399 126l10 -9" stroke="#b4b4b4" stroke-width="3"/>
  <path d="M431 129h16" stroke="#8a8a8a" stroke-width="2"/>
  <path d="M258 129h11" stroke="#aaa" stroke-width="1"/>
  <!-- paragraph icons -->
  <g stroke="#a6a6a6" stroke-width="1" fill="none">
    <path d="M480 77.5h8M480 83.5h8M480 89.5h8"/>
    <path d="M514 77.5h9M514 83.5h9M514 89.5h9"/>
    <path d="M558 79.5h8M558 83.5h8M558 87.5h8M554.5 77v14M552 79l2.5 -3 2.5 3M552 89l2.5 3 2.5 -3"/>
    <path d="M585.5 77v14M589.5 77v14M593.5 82v9M597.5 82v9M584 89l1.5 2 1.5 -2M588 89l1.5 2 1.5 -2M592 89l1.5 2 1.5 -2M596 89l1.5 2 1.5 -2"/>
    <path d="M474 100.5h16M482 104.5h8M482 108.5h8M474 112.5h16"/>
    <path d="M496 100.5h16M505 104.5h7M505 108.5h7M496 112.5h16"/>
    <path d="M528 102.5h5M528 106.5h5M528 110.5h5M536 102.5h5M536 106.5h5M536 110.5h5"/>
    <path d="M586.5 101v13M599.5 101v13M586 101.5h2M586 113.5h2M598 101.5h2M598 113.5h2M593 100v14M591 102l2 -2 2 2M591 112l2 2 2 -2M589 107.5h8"/>
    <path d="M475 125.5h14M475 128.5h14M475 131.5h14M475 134.5h10"/>
    <path d="M497 125.5h14M499 128.5h10M497 131.5h14M499 134.5h10"/>
    <path d="M519 125.5h14M523 128.5h10M519 131.5h14M523 134.5h10"/>
    <path d="M541 125.5h14M541 128.5h14M541 131.5h14M541 134.5h14"/>
    <path d="M562.5 122.5v15M577.5 122.5v15M565 127.5h10M565 130.5h10M565 133.5h10M565 136.5h10M565 123.5h10M565 123.5l2 -1.5M565 123.5l2 1.5M575 123.5l-2 -1.5M575 123.5l-2 1.5"/>
    <rect x="589.5" y="128.5" width="10" height="9" fill="#f3eef3"/><path d="M592 131.5h5M592 134.5h5"/>
  </g>
  <path d="M584 122h9l4 5h-13z" fill="#b8b8b8"/>
  <g fill="#a6a6a6"><circle cx="476.5" cy="77.5" r="1.2"/><circle cx="476.5" cy="83.5" r="1.2"/><circle cx="476.5" cy="89.5" r="1.2"/>
  <path d="M474 106.5l5 -3.5v7zM496 103l5 3.5 -5 3.5z"/><path d="M478 106.5h3M500 106.5h3" stroke="#a6a6a6" stroke-width="2"/>
  <path d="M496 83h5l-2.5 3zM530 83h5l-2.5 3zM572 83h5l-2.5 3zM604 83h5l-2.5 3zM547 106h5l-2.5 3zM604 106h5l-2.5 3zM604 129h5l-2.5 3z"/></g>
  <text x="510" y="80" font-size="5" fill="#a6a6a6" font-family="Liberation Sans">1</text><text x="510" y="86" font-size="5" fill="#a6a6a6" font-family="Liberation Sans">2</text><text x="510" y="92" font-size="5" fill="#a6a6a6" font-family="Liberation Sans">3</text>
  <text x="592" y="82" font-size="9" fill="#a6a6a6">가</text>
  <path d="M456 155h5v5h-5zM614 155h5v5h-5zM786 155h5v5h-5z" fill="none" stroke="#b0b0b0" stroke-width="1"/>
  <!-- drawing -->
  <rect x="629.5" y="81.5" width="15" height="13" fill="none" stroke="#3b7fc4" stroke-width="1.3"/>
  <circle cx="648" cy="86" r="7" fill="none" stroke="#3b7fc4" stroke-width="1.3"/>
  <path d="M643 87.5l7.5 7.5 -7.5 7.5 -7.5 -7.5z" fill="#fff" stroke="#3b7fc4" stroke-width="1.3"/>
  <path d="M642 133h6l-3 3z" fill="#555"/>
  <rect x="672.5" y="78.5" width="11" height="11" fill="#fff" stroke="#555" stroke-width="1"/>
  <rect x="678" y="82" width="16" height="16" fill="#ebc27a"/>
  <rect x="686.5" y="93.5" width="11" height="11" fill="#fff" stroke="#555" stroke-width="1"/>
  <path d="M683 133h6l-3 3z" fill="#555"/>
  <rect x="719.5" y="79.5" width="26" height="26" rx="7" fill="#f3f3f3" stroke="#c8c8c8" stroke-width="1.2"/>
  <path d="M731 104l15 -15 3 3 -15 15z" fill="#bfbfbf"/>
  <path d="M749 133h5l-2.5 3z" fill="#b8b8b8"/>
  <g fill="none" stroke="#b0b0b0" stroke-width="1.2"><path d="M764 85l6 -6 5 5 -6 6z"/><path d="M762 100.5h12v12h-12z"/><path d="M765 110l8 -8"/><ellipse cx="770" cy="129" rx="6" ry="4"/></g>
  <path d="M762 91h16" stroke="#d8d8d8" stroke-width="2"/>
  <path d="M782 83h5l-2.5 3zM782 106h5l-2.5 3zM782 129h5l-2.5 3z" fill="#aaa"/>
  <!-- editing -->
  <rect x="804.5" y="74.5" width="29" height="29" fill="#fff" stroke="#c6c6c6"/>
  <circle cx="821" cy="87" r="3.5" fill="none" stroke="#2e75b6" stroke-width="1.8"/><path d="M818.5 89.5l-4 4" stroke="#2e75b6" stroke-width="2"/>
  <path d="M816 131h6l-3 3z" fill="#555"/>
  <path d="M885 157l4 -4 4 4" fill="none" stroke="#6a6a6a" stroke-width="1.8"/>
</svg>
<div class="t rl" style="left:3px;top:111px;font-size:13px;color:#333">붙여넣기</div>
<div class="t rl" style="left:13px;top:148px;font-size:13px;color:#333">클립보드</div>
<div class="t rl" style="left:100px;top:111px;font-size:13px;color:#333">새 슬라이드</div>
<div class="t rl" style="left:125px;top:148px;font-size:13px;color:#333">슬라이드</div>
<div class="t" style="left:341px;top:86px;font-size:13px;color:#d9b59c">14</div>
<div class="t" style="left:393px;top:86px;font-size:12px;color:#aaa">가</div>
<div class="t" style="left:415px;top:88px;font-size:11px;color:#aaa">가</div>
<div class="t" style="left:443px;top:83px;font-size:10px;color:#aaa">가</div>
<div class="t" style="left:215px;top:117px;font-size:11px;color:#aaa;font-weight:bold">가</div>
<div class="t" style="left:237px;top:117px;font-size:11px;color:#aaa;font-style:italic">가</div>
<div class="t" style="left:258px;top:116px;font-size:11px;color:#aaa">가</div>
<div class="t" style="left:281px;top:115px;font-size:14px;color:#aaa;font-weight:bold;text-shadow:1px 1px 1px #ccc">S</div>
<div class="t" style="left:300px;top:118px;font-size:9px;color:#aaa;letter-spacing:-1.5px;transform:scaleX(0.8);transform-origin:0 0">가ㅂㅂ</div>
<div class="t" style="left:322px;top:114px;font-size:10px;color:#aaa">간나</div>
<div class="t" style="left:355px;top:115px;font-size:14px;color:#aaa">Aa</div>
<div class="t" style="left:399px;top:113px;font-size:10px;color:#aaa">가</div>
<div class="t" style="left:432px;top:114px;font-size:13px;color:#aaa">가</div>
<div class="t rl" style="left:316px;top:148px;font-size:13px;color:#333">글꼴</div>
<div class="t rl" style="left:523px;top:148px;font-size:13px;color:#333">단락</div>
<div class="t rl" style="left:633px;top:111px;font-size:13px;color:#333">도형</div>
<div class="t rl" style="left:674px;top:111px;font-size:13px;color:#333">정렬</div>
<div class="t rl" style="left:721px;top:111px;font-size:13px;color:#aaa">빠른</div>
<div class="t rl" style="left:710px;top:126px;font-size:13px;color:#aaa">스타일</div>
<div class="t rl" style="left:682px;top:148px;font-size:13px;color:#333">그리기</div>
<div class="t rl" style="left:808px;top:109px;font-size:13px;color:#333">편집</div>

<!-- ZOOM PANEL -->
<div class="a" style="left:1367px;top:0;width:314px;height:620px;background:#202124;border-radius:0 0 3px 3px"></div>
<svg class="a" style="left:1367px;top:0" width="314" height="40">
  <rect x="8" y="12" width="12" height="3" rx="1.5" fill="#c4c4c4"/>
  <rect x="36" y="7" width="12" height="8" rx="1.5" fill="#c4c4c4"/>
  <rect x="64" y="3" width="12" height="5" rx="1.5" fill="#c4c4c4"/><rect x="64" y="10" width="12" height="5" rx="1.5" fill="#c4c4c4"/>
  <g fill="#2d8cff">
    <rect x="91" y="2" width="3.6" height="3.6" rx="1.2"/><rect x="96" y="2" width="3.6" height="3.6" rx="1.2"/><rect x="101" y="2" width="3.6" height="3.6" rx="1.2"/>
    <rect x="91" y="7" width="3.6" height="3.6" rx="1.2"/><rect x="96" y="7" width="3.6" height="3.6" rx="1.2"/><rect x="101" y="7" width="3.6" height="3.6" rx="1.2"/>
    <rect x="91" y="12" width="3.6" height="3.6" rx="1.2"/><rect x="96" y="12" width="3.6" height="3.6" rx="1.2"/><rect x="101" y="12" width="3.6" height="3.6" rx="1.2"/>
  </g>
</svg>
<!-- video 1 -->
<svg class="a" style="left:1372px;top:148px" width="304" height="171">
  <defs>
    <filter id="bl1" x="-20%" y="-20%" width="140%" height="140%"><feGaussianBlur stdDeviation="1.2"/></filter>
    <filter id="bl2" x="-20%" y="-20%" width="140%" height="140%"><feGaussianBlur stdDeviation="2"/></filter>
    <filter id="bl4" x="-20%" y="-20%" width="140%" height="140%"><feGaussianBlur stdDeviation="3"/></filter>
  </defs>
  <rect width="304" height="171" fill="#d6d2ce"/>
  <g filter="url(#bl1)">
    <path d="M105 0h199v45h-199z" fill="#dbd8d5"/>
    <path d="M150 40h154v131h-154z" fill="#d2cfcc"/>
    <path d="M225 42h79v129h-79z" fill="#f0f0f0"/>
    <path d="M235 58h60M235 68h60M235 78h60M235 88h60M235 98h60M235 108h60" stroke="#dcdcdc" stroke-width="1"/>
    <path d="M283 42v100" stroke="#cfcfcf" stroke-width="3"/>
    <!-- left wall under sill -->
    <path d="M0 70l105 55v46h-105z" fill="#d4cbbd"/>
    <path d="M100 0h15v171h-15z" fill="#c7c3bf"/>
    <path d="M115 45h40v126h-40z" fill="#cdc9c5"/>
    <!-- window -->
    <path d="M0 0h105v110l-105 -60z" fill="#efeeec"/>
    <path d="M0 0h42v55l-42 -5z" fill="#fafcfd"/>
    <path d="M38 0h22l15 35v50l-35 -22z" fill="#b5d0e8"/>
    <path d="M62 25l10 10v50l-10 -8z" fill="#8fa6b8"/>
    <path d="M72 38l25 25v45l-25 -22z" fill="#f6f8fa"/>
    <path d="M88 70l12 8v30l-12 -8z" fill="#9fc3df"/>
    <path d="M58 0h8v12" fill="#f3f1ee"/>
    <!-- sill -->
    <path d="M0 48l103 62v14l-103 -58z" fill="#b8a68e"/>
    <path d="M68 112l15 2v30l-15 -2z" fill="#f4ecd8"/>
    <path d="M95 5h4v60h-4z" fill="#f6f1e4"/>
    <path d="M110 120l25 -5 15 6 -40 10z" fill="#3f8ea8"/>
  </g>
  <g filter="url(#bl4)">
    <path d="M82 171l4 -30c15 -16 45 -22 65 -24h80c30 4 50 15 60 54z" fill="#b4bdd0"/>
    <path d="M146 92c-3 -40 10 -72 45 -72c35 0 52 25 48 72z" fill="#2e2a29"/>
    <path d="M150 80h82v18h-82z" fill="#3a3332"/>
    <path d="M150 95h78v25h-78z" fill="#735e60"/>
    <path d="M156 115h66v40c-10 6 -50 6 -66 0z" fill="#a88a89"/>
    <ellipse cx="147" cy="88" rx="5" ry="8" fill="#b8948e"/>
    <path d="M160 158c15 8 45 8 62 -2v15h-62z" fill="#c4c9d8"/>
    <path d="M284 142h20v29h-20z" fill="#5c4647"/>
  </g>
  <rect x="0" y="140" width="85" height="31" fill="#a6a6ab" filter="url(#bl2)"/>
  <rect x="8" y="150" width="70" height="10" fill="#8c8c92" filter="url(#bl2)"/>
</svg>
<div class="a" style="left:1367px;top:319px;width:314px;height:3px;background:#202124"></div>
<div class="a" style="left:1372px;top:316px;width:85px;height:9px;background:#9fa0a6;filter:blur(2px);border-radius:0 0 20px 6px"></div>
<!-- video 2 -->
<svg class="a" style="left:1372px;top:321px" width="304" height="172">
  <defs><filter id="bl3" x="-20%" y="-20%" width="140%" height="140%"><feGaussianBlur stdDeviation="2.5"/></filter></defs>
  <rect width="304" height="172" fill="#f6f5f1"/>
  <g fill="none" stroke="#222" stroke-width="0.9">
    <path d="M29 18h48M10 102.5h86"/>
    <path d="M10.5 17v86M29.5 17c-2 18 -8 35 -12 46c4 12 7 28 6 40"/>
    <path d="M10 17h19M77 17h19"/>
    <path d="M95.5 17v86M76.5 17c2 18 9 35 13 46c-4 12 -7 28 -6 40"/>
    <rect x="14" y="61" width="5" height="5"/><rect x="87" y="61" width="5" height="5"/>
    <path d="M29 25c3 -2 6 0 7 3c2 -2 6 -1 7 2c3 0 6 2 6 6c0 4 -3 6 -6 6h-14"/>
    <path d="M33 103c-1 -5 0 -9 2 -11l3 2h6l3 -3c2 3 2 7 1 12"/>
    <circle cx="68.5" cy="89" r="3"/><path d="M68.5 92v11M63 86a3 3 0 1 1 4 -3M74 86a3 3 0 1 0 -4 -3M64 92a3 3 0 1 0 3 -1M73 92a3 3 0 1 1 -3 -1"/>
    <path d="M220 29h84M220 29v140M220 69h84M220 110h84M220 152h84"/>
    <rect x="233" y="41" width="38" height="27"/><rect x="236" y="44" width="32" height="21"/>
    <circle cx="251" cy="57" r="6"/>
    <path d="M250 87c3 -3 6 -3 6 2v12h-6zM246 103h12v7h-12z"/>
    <path d="M275 110c0 -10 6 -12 7 -22v-8M269 80c-2 -3 2 -6 5 -3c3 -3 6 0 4 3"/>
    <path d="M287 110c0 -10 -6 -12 -5 -22"/>
    <path d="M266 152l5 -28h5l-5 28M275 152v-28h8v28M283 152v-31h9v31M292 152v-28h12"/>
  </g>
  <circle cx="51" cy="33" r="7.5" fill="#e8641e"/>
  <g filter="url(#bl3)">
    <path d="M98 172c3 -18 15 -32 45 -40l27 8 27 -8c35 8 52 22 58 40z" fill="#c6c5b9"/>
    <path d="M155 118h30v22h-30z" fill="#dcc0b0"/>
    <ellipse cx="171" cy="80" rx="29" ry="36" fill="#3f312c"/>
    <ellipse cx="171" cy="101" rx="25" ry="34" fill="#e6d0c3"/>
    <path d="M143 78c5 -25 50 -28 57 0l-3 6c-14 -12 -38 -12 -51 0z" fill="#3a2c27"/>
  </g>
  <g fill="none" stroke="#4a3c38" stroke-width="1.1"><circle cx="159" cy="101" r="9"/><circle cx="183" cy="100" r="9"/><path d="M168 100h6"/></g>
  <path d="M164 117h13" stroke="#c98f96" stroke-width="2.5"/>
  <path d="M130 132c5 15 12 30 16 40M200 130c2 15 3 25 -1 35" fill="none" stroke="#fafafa" stroke-width="1"/>
  <rect x="0" y="152" width="47" height="20" fill="#5c5c5c"/>
</svg>
<div class="t" style="left:1377px;top:475px;font-size:13px;color:#fff">고보경</div>
<div class="a" style="left:1373px;top:318px;width:80px;height:8px;background:#a9aaaf;filter:blur(2px);border-radius:0 0 30px 10px"></div>


</body></html>
